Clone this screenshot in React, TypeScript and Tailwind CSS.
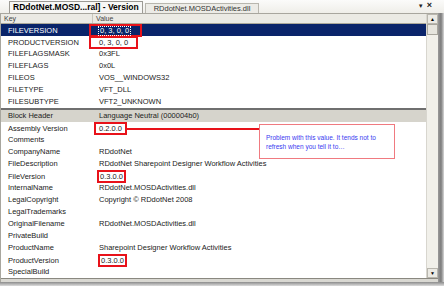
import React from 'react';

const font = "'Liberation Sans', Arial, sans-serif";

interface Row {
  k: string;
  v?: string;
  sel?: boolean;
  box?: string;
}

const fixed: Row[] = [
  { k: 'FILEVERSION', v: '0, 3, 0, 0', sel: true, box: 'ml-[-10px] pl-[7px] pr-[9px]' },
  { k: 'PRODUCTVERSION', v: '0, 3, 0, 0', box: 'ml-[-10px] pl-[8px] pr-[8px]' },
  { k: 'FILEFLAGSMASK', v: '0x3FL' },
  { k: 'FILEFLAGS', v: '0x0L' },
  { k: 'FILEOS', v: 'VOS__WINDOWS32' },
  { k: 'FILETYPE', v: 'VFT_DLL' },
  { k: 'FILESUBTYPE', v: 'VFT2_UNKNOWN' },
];

const strings: Row[] = [
  { k: 'Assembly Version', v: '0.2.0.0', box: 'ml-[-5px] px-[3px]' },
  { k: 'Comments' },
  { k: 'CompanyName', v: 'RDdotNet' },
  { k: 'FileDescription', v: 'RDdotNet Sharepoint Designer Workflow Activities' },
  { k: 'FileVersion', v: '0.3.0.0', box: 'ml-[-2px] px-[1px]' },
  { k: 'InternalName', v: 'RDdotNet.MOSDActivities.dll' },
  { k: 'LegalCopyright', v: 'Copyright © RDdotNet 2008' },
  { k: 'LegalTrademarks' },
  { k: 'OriginalFilename', v: 'RDdotNet.MOSDActivities.dll' },
  { k: 'PrivateBuild' },
  { k: 'ProductName', v: 'Sharepoint Designer Workflow Activities' },
  { k: 'ProductVersion', v: '0.3.0.0', box: 'ml-[-1px] px-[1px]' },
  { k: 'SpecialBuild' },
];

function Line({ r }: { r: Row }) {
  return (
    <div className={`grid grid-cols-[92px_1fr] h-[12px] items-center ${r.sel ? 'bg-[#0a246a] text-white' : 'text-[#222]'}`}>
      <span className="pl-[7px]">{r.k}</span>
      <span className="pl-[6px] flex">
        {r.box ? (
          <span className={`border-2 border-[#e8121a] h-[13px] flex items-center ${r.box}`}>
            <span className={r.sel ? 'border border-dotted border-white px-[1px] leading-[8px]' : ''}>{r.v}</span>
          </span>
        ) : (
          <span>{r.v}</span>
        )}
      </span>
    </div>
  );
}

export default function App() {
  return (
    <div className="w-[444px] h-[286px] bg-white flex flex-col overflow-hidden text-[7.5px] leading-none" style={{ fontFamily: font }}>
      {/* tabs */}
      <div className="h-[13px] flex items-end bg-gradient-to-b from-[#fbfbfa] to-[#efeee9] shrink-0">
        <div className="ml-[9px] h-[12px] px-[3px] bg-[#f7f7f5] border border-b-0 border-[#9c9a94] font-bold text-[8.5px] flex items-center text-black">
          RDdotNet.MOSD...ral] - Version
        </div>
        <div className="ml-[2px] h-[10px] px-[8px] bg-[#ecebe6] border border-b-0 border-[#b8b6ae] text-[7.5px] flex items-center text-[#333]">
          RDdotNet.MOSDActivities.dll
        </div>
        <div className="ml-auto mr-[12px] mb-[3px] flex items-center gap-[3px] text-[#222]">
          <span className="text-[6px]">▼</span>
          <span className="text-[9px] font-bold">×</span>
        </div>
      </div>

      <div className="flex-1 flex min-h-0">
        <div className="flex-1 flex flex-col border-l border-[#a8a69e]">
          <div className="flex-1 flex min-h-0 border-t border-[#a8a69e]">
            {/* list */}
            <div className="flex-1 relative">
              <div className="grid grid-cols-[92px_1fr] h-[10px] items-center bg-[#ebeae4] border-b border-[#aca899] text-[#444] text-[7px]">
                <span className="pl-[3px] border-r border-[#c8c6bc] h-full flex items-center">Key</span>
                <span className="pl-[3px]">Value</span>
              </div>
              {fixed.map(r => <Line key={r.k} r={r} />)}
              <div className="h-[2px] bg-[#6f6f6f]" />
              <div className="grid grid-cols-[92px_1fr] h-[12px] items-center bg-[#d6d4cc] text-[#222]">
                <span className="pl-[7px]">Block Header</span>
                <span className="pl-[6px]">Language Neutral (000004b0)</span>
              </div>
              {strings.map(r => <Line key={r.k} r={r} />)}

              {/* annotation */}
              <div className="absolute left-[126px] top-[114px] w-[133px] h-[1.5px] bg-[#e8121a]" />
              <div className="absolute left-[258px] top-[110px] w-[136px] h-[35px] border border-[#f07a80] bg-white pl-[6px] pt-[8px] text-[#3a3af0] text-[6.5px] leading-[9px] whitespace-nowrap">
                Problem with this value. It tends not to<br />refresh when you tell it to…
              </div>
            </div>
            {/* scrollbar */}
            <div className="w-[12px] bg-[#f1f0ea] border-l border-[#d8d6cf] flex flex-col items-center">
              <div className="w-[11px] h-[10px] bg-[#ebeae4] border border-[#b8b6ae] flex items-center justify-center text-[5px] text-black">▲</div>
              <div className="w-[11px] h-[11px] bg-[#e6e5de] border border-[#a8a69e]" />
              <div className="flex-1" />
              <div className="w-[11px] h-[10px] bg-[#ebeae4] border border-[#b8b6ae] flex items-center justify-center text-[5px] text-black">▼</div>
            </div>
          </div>
          <div className="h-[4px] border-t border-[#8a8880] bg-[#d9d8d2]" />
        </div>
        {/* window shadow right */}
        <div className="w-[6px] bg-gradient-to-r from-[#9a9a9a] via-[#7c7c7c] to-[#d8d8d8]" />
      </div>
      <div className="h-[4px] bg-gradient-to-b from-[#8c8c8c] to-[#dcdcdc] shrink-0" />
    </div>
  );
}
